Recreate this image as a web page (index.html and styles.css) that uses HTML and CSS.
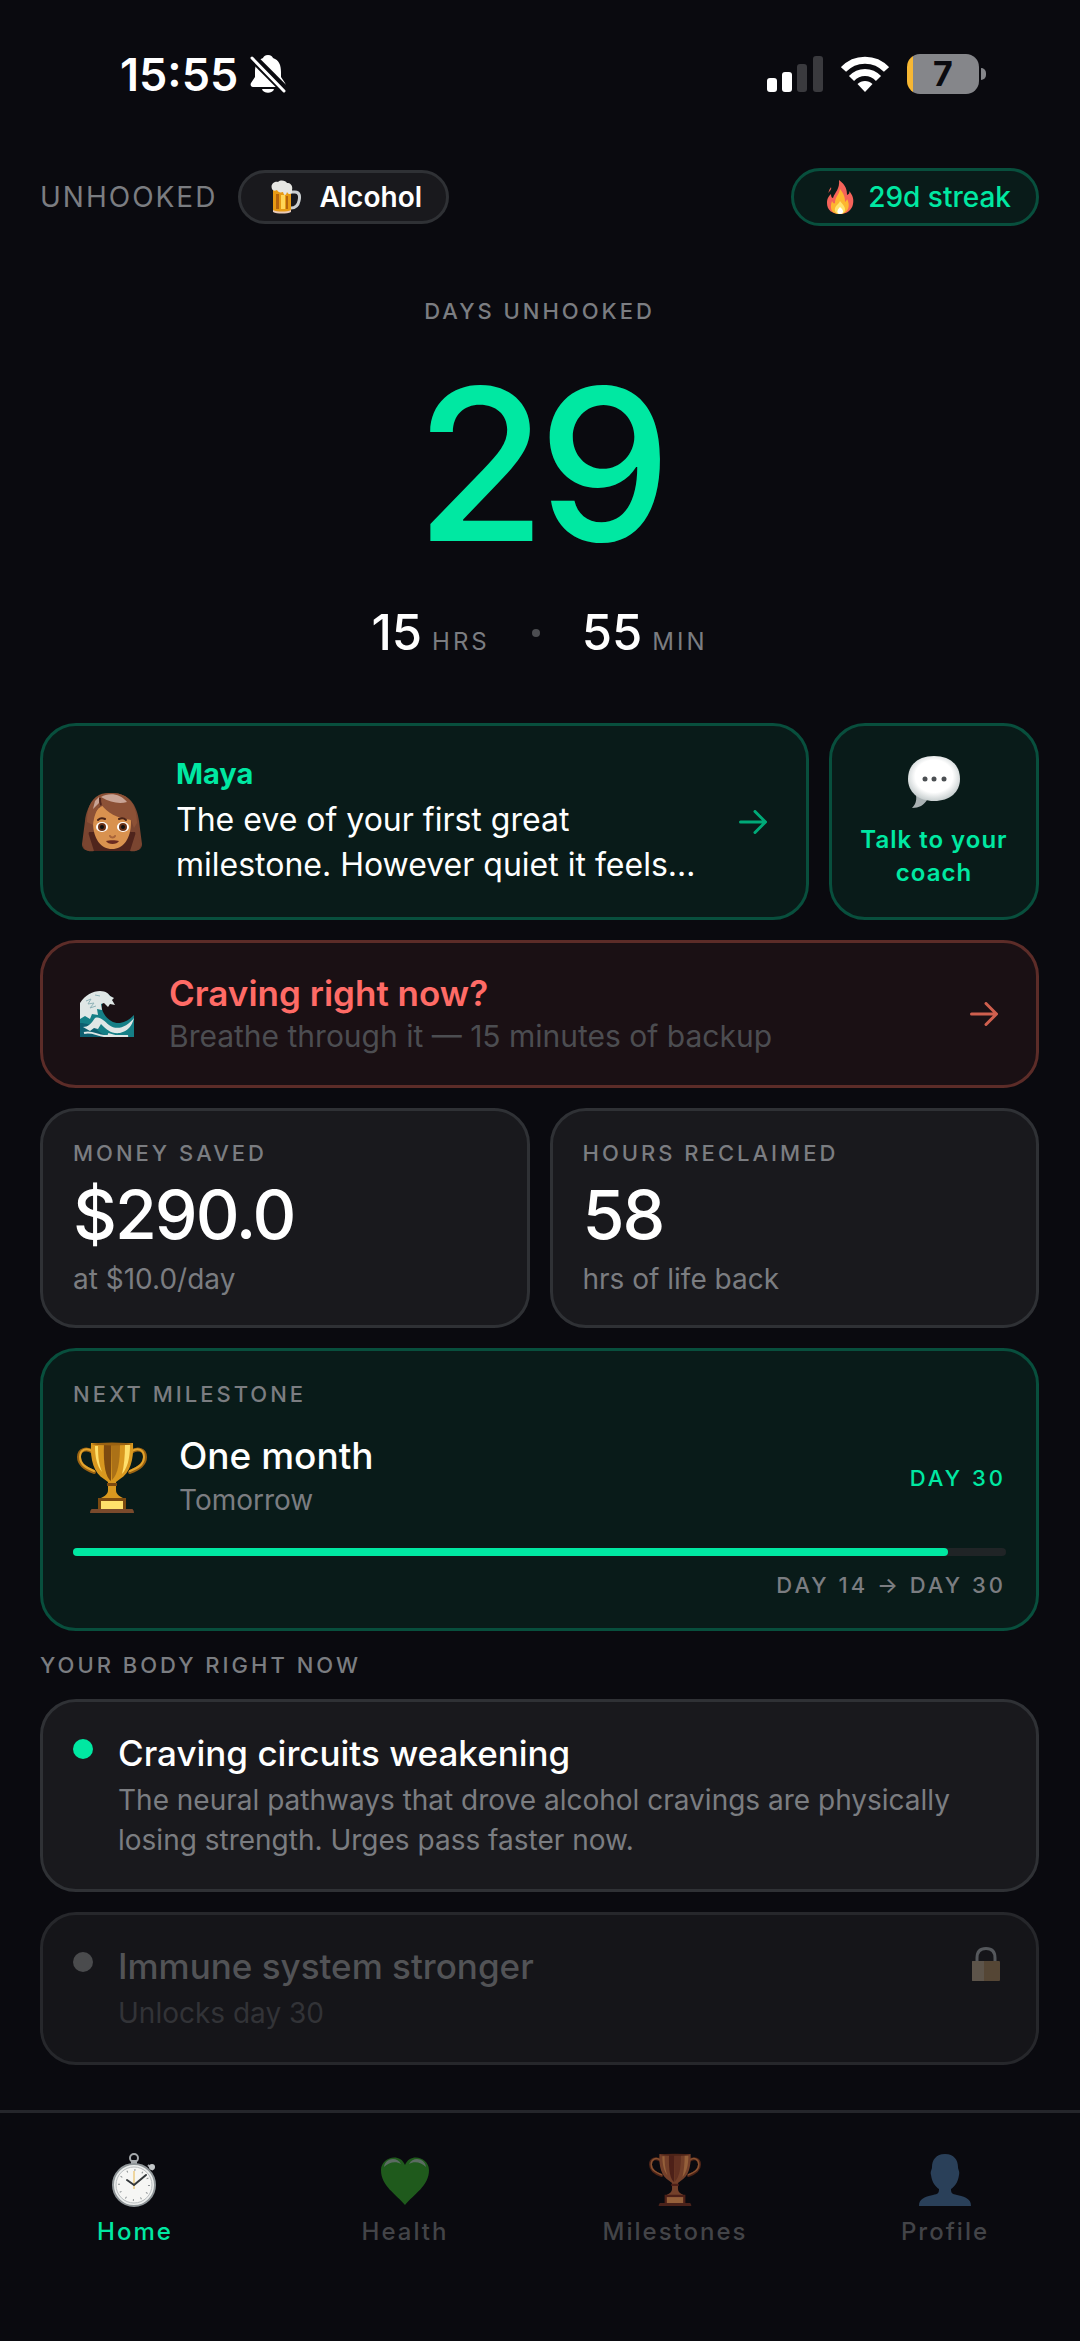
FILE: index.html
```html
<!DOCTYPE html>
<html lang="en">

<head>
    <meta charset="utf-8">
    <meta name="viewport" content="width=device-width, initial-scale=1">
    <title>Unhooked</title>
    <link rel="stylesheet" href="styles.css">
</head>

<body>
    <!-- shared icons -->
    <svg class="sprite" aria-hidden="true">
        <symbol id="arrow" viewBox="0 0 28 24">
            <path d="M1.5 12h24M16 1.5L26.5 12 16 22.5" fill="none" stroke="currentColor" stroke-width="3" stroke-linecap="round" stroke-linejoin="round" />
        </symbol>
        <symbol id="trophy" viewBox="0 0 70 72">
            <g fill="none" stroke-linecap="round">
                <path class="cup-dark" d="M16 10C9 5 2 8 2 15c0 8 7 12 15 15M54 10c7-5 14-2 14 5 0 8-7 12-15 15" stroke-width="4" />
                <path class="cup-mid" d="M15 9C9 5 3 8 3 15c0 8 7 11 14 14M55 9c6-4 12-1 12 6 0 8-7 11-14 14" stroke-width="2" />
            </g>
            <path class="cup-fill" d="M14 1h42c1 17-3 30-13 36l-4 3v8c0 4 3 6 7 8v2H24v-2c4-2 7-4 7-8v-8l-4-3C17 31 13 18 14 1z" />
            <path class="cup-shade" d="M27 2h7v37c-5-3-8-15-7-37z" />
            <path class="cup-band" d="M34 2h9c0 18-2 30-8 36z" opacity=".5" />
            <path class="cup-light" d="M48 3h5c0 14-3 24-8 29 2-8 3-18 3-29zM18 4h3c0 12 1 18 4 26-5-6-7-15-7-26z" />
            <path class="cup-shade" d="M30 41h10v3H30zM21 56h28v12H21z" />
            <path class="cup-light" d="M24 59h22v8H24z" />
            <path class="cup-base" d="M15 67h40c1 0 2 2 2 4H13c0-2 1-4 2-4z" />
            <ellipse class="cup-rim" cx="35" cy="2" rx="20" ry="1.5" />
        </symbol>
    </svg>

    <div class="status-bar">
        <div class="status-left">
            <span class="time">15:55</span>
            <svg width="36" height="40" viewBox="0 0 36 40" aria-label="Silent mode">
                <path d="M18 1c-3 0-4.500 1.500-5 3-6 2-8 7-8 14v5l-4 6c-1 2 0 4 2 4h30c2 0 3-2 2-4l-4-6v-5c0-7-2-12-8-14-.5-1.500-2-3-5-3z" fill="#fff" />
                <path d="M12 35h12c-1 5-11 5-12 0z" fill="#fff" />
                <path d="M2 3l33 33" stroke="#0a0a0f" stroke-width="9" />
                <path d="M2 4l32 33" stroke="#fff" stroke-width="3" stroke-linecap="round" />
            </svg>
        </div>
        <div class="status-right">
            <svg width="56" height="36" viewBox="0 0 56 36" aria-label="Signal">
                <rect x="0" y="22" width="10" height="14" rx="3" fill="#fff" />
                <rect x="15" y="16" width="10" height="20" rx="3" fill="#fff" />
                <rect x="30" y="8" width="10" height="28" rx="3" fill="#3a3a3e" />
                <rect x="46" y="0" width="10" height="36" rx="3" fill="#3a3a3e" />
            </svg>
            <svg width="48" height="36" viewBox="0 0 48 36" aria-label="Wi-Fi">
                <g fill="none" stroke="#fff" stroke-width="7">
                    <path d="M2.500 13.500C14 1 34 1 45.500 13.500" />
                    <path d="M10.500 22.500c7.500-8 19.500-8 27 0" />
                </g>
                <path d="M24 36l-7.500-8c4-4 11-4 15 0z" fill="#fff" />
            </svg>
            <div class="battery"><span class="battery-level">7</span></div>
        </div>
    </div>

    <main class="main">
        <header class="header">
            <h1 class="brand">UNHOOKED</h1>
            <button class="pill">
                <svg width="30" height="34" viewBox="0 0 30 34" aria-hidden="true">
                    <path d="M20 12h4c5 0 5 5 4 9-1 5-4 7-8 7" fill="none" stroke="#c9ced0" stroke-width="3" />
                    <path d="M2 9h18v22c-4 2-14 2-18 0z" fill="#e79a14" />
                    <path d="M5 14h3v15H5zM15 16h2v13h-2z" fill="#b5640c" />
                    <path d="M10 15h4v14h-4z" fill="#ffd557" />
                    <path d="M2 30c4 2 14 2 18 0v2c-4 2-14 2-18 0z" fill="#e8c9b8" />
                    <path d="M1 9c-2-5 3-8 6-7 3-3 8-1 9 1 4 0 6 3 5 7v3c-2 2-4 1-5-1-1 4-3 4-4 0-3 1-5 0-6-2-2 1-4 1-5-1z" fill="#e6e6e2" />
                </svg>
                <span>Alcohol</span>
            </button>
            <div class="pill pill-streak">
                <svg width="28" height="36" viewBox="0 0 28 36" aria-hidden="true">
                    <path d="M13 1c7 5 8 10 8 15 2-1 3-2 2-4 4 4 5 9 4 13-1 6-6 10-13 10C6 35 1 31 1 24c0-5 2-7 4-9 0 3 1 4 2 4 2-6 7-9 6-18z" fill="#f5635a" />
                    <path d="M3 12c0-2 2-3 2-4 1 2-1 4-3 6z" fill="#f5635a" />
                    <path d="M14 10c5 6 5 10 5 13 1-1 2-2 2-3 3 5 3 14-7 15C4 35 4 28 6 22c1 2 2 3 3 2 0-6 4-8 5-14z" fill="#fdb62f" />
                    <path d="M14 22c2 3 5 5 5 8 0 4-2 5-5 5s-6-2-5-6c1-3 4-4 5-7z" fill="#ffe36b" />
                    <path d="M14 28c5 4 3 7 0 7s-4-3 0-7z" fill="#fff" />
                </svg>
                <span>29d streak</span>
            </div>
        </header>

        <section class="hero">
            <h2 class="label">DAYS UNHOOKED</h2>
            <div class="days">29</div>
            <div class="clock">
                <span class="clock-item"><span class="clock-num">15</span> <span class="clock-unit">HRS</span></span>
                <span class="clock-dot"></span>
                <span class="clock-item"><span class="clock-num">55</span> <span class="clock-unit">MIN</span></span>
            </div>
        </section>

        <div class="cards">
            <div class="coach-row">
                <button class="card card-green message">
                    <svg width="62" height="60" viewBox="0 0 62 60" aria-hidden="true">
                        <path d="M31 1C14 1 6 13 4 29L1 52c0 5 4 7 9 7h42c5 0 9-2 9-7l-3-23C56 13 48 1 31 1z" fill="#7a4530" />
                        <path d="M8 40L2 55c2 3 6 4 10 4h38c4 0 8-1 10-4l-6-15z" fill="#4f241c" />
                        <path d="M2 53l5-13 6 19c-6 1-11-1-11-6zM60 53l-5-13-6 19c6 1 11-1 11-6z" fill="#7a4530" />
                        <path d="M12 30c0-12 8-18 19-18s19 6 19 18c0 17-8 27-19 27S12 47 12 30z" fill="#d9924f" />
                        <path d="M18 3c-9 5-12 14-12 27l6 3c1-9 3-14 8-21 6 9 16 14 30 16l3 8 3-5C56 13 48 1 31 1c-5 0-9 0-13 2z" fill="#8c5136" />
                        <path d="M20 5c8-5 20-3 26 5-7 2-16 1-26-5zM14 9l4-4v6l-6 6z" fill="#c9a495" />
                        <path d="M19 6c0 3 0 5 1 7" fill="none" stroke="#4f241c" stroke-width="2" />
                        <g fill="none" stroke="#4a2418" stroke-width="2" stroke-linecap="round">
                            <path d="M17 28c2-2 5-2 7-1M38 27c2-1 5-1 7 1" />
                        </g>
                        <ellipse cx="21" cy="35" rx="6" ry="5" fill="#fff" />
                        <ellipse cx="42" cy="35" rx="6" ry="5" fill="#fff" />
                        <circle cx="21" cy="35" r="4" fill="#6b3318" />
                        <circle cx="42" cy="35" r="4" fill="#6b3318" />
                        <circle cx="21" cy="35" r="2" fill="#111" />
                        <circle cx="42" cy="35" r="2" fill="#111" />
                        <path d="M29 44c1 2 4 2 5 0" fill="none" stroke="#a8643a" stroke-width="2" stroke-linecap="round" />
                        <path d="M25 49c3-1 10-1 13 0-2 4-11 4-13 0z" fill="#6a2a20" />
                    </svg>
                    <span class="message-text">
                        <span class="message-name">Maya</span>
                        <span class="message-body">The eve of your first great milestone. However quiet it feels…</span>
                    </span>
                    <svg class="arrow" width="28" height="24" aria-hidden="true"><use href="#arrow" /></svg>
                </button>
                <button class="card card-green coach">
                    <svg width="54" height="54" viewBox="0 0 54 54" aria-hidden="true">
                        <defs>
                            <radialGradient id="bubble" cx=".5" cy=".45" r=".6">
                                <stop offset=".6" stop-color="#fff" />
                                <stop offset="1" stop-color="#b9c2c3" />
                            </radialGradient>
                        </defs>
                        <path d="M9 40c1 6-1 10-4 13 7 0 12-3 15-8z" fill="#a9b1b3" />
                        <path d="M27 1c16 0 26 9 26 23 0 13-10 22-26 22S1 37 1 24C1 10 11 1 27 1z" fill="url(#bubble)" />
                        <circle cx="18" cy="24" r="2.500" fill="#4b4f52" />
                        <circle cx="27" cy="24" r="2.500" fill="#4b4f52" />
                        <circle cx="37" cy="24" r="2.500" fill="#4b4f52" />
                    </svg>
                    <span>Talk to your coach</span>
                </button>
            </div>

            <button class="card card-red craving">
                <svg width="54" height="46" viewBox="0 0 54 46" aria-hidden="true">
                    <path d="M0 46V14C4 6 12 1 20 1c6 0 10 3 13 7l-4 1 1 4-5-2c-3 0-4 3-3 7 2 8 10 15 18 14 6-1 10-4 14-8v22z" fill="#157f86" />
                    <path d="M0 46V32c6 0 12 2 16 6s8 6 14 8z" fill="#0e5f70" />
                    <path d="M0 12C5 4 13 0 20 0c6 0 9 3 10 5l4 2-2 2 3 5-5-1-2 3-4-4-3 1 1 6-5-1 1 6-6-1-2 5-5-3-5 3z" fill="#dfe7e6" />
                    <path d="M6 10l5-2-3 5 6-1-4 5 6-2M15 4l5 1" fill="none" stroke="#8fb3b8" stroke-width="1" />
                    <path d="M3 36c5 0 8-3 12-9 5-2 9 3 14 7 8 6 18 2 25-7-2 8-6 13-14 15-9 1-13-3-19-9l-3 5-4-1-4 3z" fill="#dfe7e6" />
                    <path d="M4 42c8-2 12 2 20 3h24c-8 2-14 0-20-2" fill="none" stroke="#dfe7e6" stroke-width="2" />
                </svg>
                <span class="craving-text">
                    <span class="craving-title">Craving right now?</span>
                    <span class="craving-sub">Breathe through it — 15 minutes of backup</span>
                </span>
                <svg class="arrow" width="28" height="24" aria-hidden="true"><use href="#arrow" /></svg>
            </button>

            <div class="stats">
                <section class="card stat">
                    <h2 class="label">MONEY SAVED</h2>
                    <div class="stat-value">$290.0</div>
                    <div class="stat-note">at $10.0/day</div>
                </section>
                <section class="card stat">
                    <h2 class="label">HOURS RECLAIMED</h2>
                    <div class="stat-value">58</div>
                    <div class="stat-note">hrs of life back</div>
                </section>
            </div>

            <section class="card card-green milestone">
                <h2 class="label">NEXT MILESTONE</h2>
                <div class="milestone-row">
                    <svg class="trophy" width="78" height="72" aria-hidden="true"><use href="#trophy" /></svg>
                    <div class="milestone-text">
                        <div class="milestone-title">One month</div>
                        <div class="milestone-when">Tomorrow</div>
                    </div>
                    <span class="label label-green">DAY 30</span>
                </div>
                <div class="progress" role="progressbar" aria-label="Next milestone" aria-valuemin="0" aria-valuemax="16" aria-valuenow="15">
                    <div class="progress-fill" style="width: 93.75%"></div>
                </div>
                <div class="label milestone-range">DAY 14 → DAY 30</div>
            </section>

            <h2 class="label label-section">YOUR BODY RIGHT NOW</h2>

            <section class="card body-card">
                <span class="dot"></span>
                <div class="body-text">
                    <h3>Craving circuits weakening</h3>
                    <p>The neural pathways that drove alcohol cravings are physically losing strength. Urges pass faster now.</p>
                </div>
            </section>

            <section class="card body-card locked">
                <span class="dot"></span>
                <div class="body-text">
                    <h3>Immune system stronger</h3>
                    <p>Unlocks day 30</p>
                </div>
                <svg class="lock" width="28" height="34" viewBox="0 0 28 34" aria-label="Locked">
                    <path d="M5 16v-5C5 4 9 1.500 14 1.500S23 4 23 11v5" fill="none" stroke="#8b8f94" stroke-width="3" />
                    <rect x="0" y="14" width="28" height="20" rx="1" fill="#8a6f4c" />
                    <path d="M0 14h12v20H0z" fill="#a39a8c" opacity=".6" />
                </svg>
            </section>
        </div>
    </main>

    <nav class="tabs">
        <a href="#home" class="tab active">
            <svg width="50" height="54" viewBox="0 0 50 54" aria-hidden="true">
                <circle cx="24" cy="5" r="4" fill="none" stroke="#a5a9ac" stroke-width="2" />
                <path d="M22 8h4v5h-4zM38 12l5 5" fill="#a5a9ac" stroke="#a5a9ac" stroke-width="2" />
                <circle cx="42" cy="14" r="3" fill="#c3c7c9" />
                <circle cx="24" cy="32" r="21" fill="#eceeed" stroke="#8f9598" stroke-width="2" />
                <circle cx="24" cy="32" r="18" fill="#f6f6f4" stroke="#b9bdbf" stroke-width="1" />
                <circle cx="24" cy="32" r="15" fill="none" stroke="#8d9294" stroke-width="2" stroke-dasharray="1 6.854" />
                <path d="M24 36V18" stroke="#e8b64a" stroke-width="1" />
                <path d="M24 32l12-10M24 32l-7-5" stroke="#33373a" stroke-width="2" stroke-linecap="round" />
            </svg>
            <span>Home</span>
        </a>
        <a href="#health" class="tab">
            <svg width="50" height="54" viewBox="0 0 50 54" aria-hidden="true">
                <path d="M25 52C16 41 1 33 1 17 1 4 20-1 25 12 30-1 49 4 49 17c0 16-15 24-24 35z" fill="#1f5a1c" />
                <path d="M4 14C5 5 17 3 21 11c-5-3-12-2-17 3zM46 14C45 5 33 3 29 11c5-3 12-2 17 3z" fill="#5b6b62" />
            </svg>
            <span>Health</span>
        </a>
        <a href="#milestones" class="tab">
            <svg class="trophy trophy-dim" width="52" height="54" aria-hidden="true"><use href="#trophy" /></svg>
            <span>Milestones</span>
        </a>
        <a href="#profile" class="tab">
            <svg width="52" height="54" viewBox="0 0 52 54" aria-hidden="true">
                <path d="M26 1c9 0 13 6 13 13 0 3 2 4 1 8-1 8-5 12-8 14 0 4 1 5 6 6 9 2 14 4 14 11H0c0-7 5-9 14-11 5-1 6-2 6-6-3-2-7-6-8-14-1-4 1-5 1-8 0-7 4-13 13-13z" fill="#2a4059" />
            </svg>
            <span>Profile</span>
        </a>
    </nav>
</body>

</html>
```

FILE: styles.css
```css
* {
    box-sizing: border-box;
}

:root {
    --bg: #0a0a0f;
    --card: #19191d;
    --border: #2f3135;
    --green: #00e8a2;
    --muted: #7b7d81;
    --dim: #4c4d51;
}

body {
    margin: 0;
    min-height: 100vh;
    display: flex;
    flex-direction: column;
    background-color: var(--bg);
    color: #ffffff;
    font-family: Inter, "Liberation Sans", sans-serif;
    font-size: 28px;
}

h1, h2, h3, p {
    margin: 0;
    font-weight: 400;
}

button {
    font: inherit;
    color: inherit;
    text-align: left;
    cursor: pointer;
}

svg {
    flex-shrink: 0;
}

.sprite {
    position: absolute;
    width: 0;
    height: 0;
}

/* status bar */
.status-bar {
    display: flex;
    justify-content: space-between;
    align-items: center;
    height: 148px;
    padding: 0 101px 0 120px;
}

.status-left {
    display: flex;
    align-items: center;
    gap: 12px;
}

.status-right {
    display: flex;
    align-items: center;
    gap: 18px;
}

.time {
    font-size: 45px;
    font-weight: 600;
}

.battery {
    position: relative;
    width: 72px;
    height: 40px;
    border-radius: 13px;
    background: linear-gradient(to right, #f7b733 6px, #85868a 6px);
    color: var(--bg);
    font-size: 34px;
    font-weight: 700;
    line-height: 40px;
    text-align: center;
}

.battery::after {
    content: "";
    position: absolute;
    right: -7px;
    top: 14px;
    width: 5px;
    height: 12px;
    border-radius: 0 5px 5px 0;
    background-color: #85868a;
}

/* header */
.main {
    padding: 20px 41px 44px 40px;
}

.header {
    display: flex;
    align-items: center;
    gap: 21px;
}

.brand {
    font-size: 28px;
    letter-spacing: 2px;
    color: var(--muted);
}

.pill {
    display: flex;
    align-items: center;
    gap: 18px;
    height: 54px;
    padding: 0 24px 0 30px;
    border: 3px solid var(--border);
    border-radius: 30px;
    background-color: var(--card);
    font-size: 28px;
    font-weight: 600;
}

.pill-streak {
    gap: 14px;
    height: 58px;
    margin-left: auto;
    padding: 0 25px 0 32px;
    border-color: #084f3d;
    background-color: #091b19;
    color: var(--green);
    font-weight: 500;
}

.label {
    font-size: 22px;
    line-height: 26px;
    font-weight: 500;
    letter-spacing: 3px;
    color: var(--muted);
}

.label-green {
    color: var(--green);
}

.label-section {
    line-height: 28px;
}

/* counter */
.hero {
    display: flex;
    flex-direction: column;
    align-items: center;
    padding: 72px 0 65px;
}

.days {
    margin: 34px 0 38px;
    font-size: 212px;
    line-height: 212px;
    font-weight: 500;
    letter-spacing: -8px;
    color: var(--green);
}

.clock {
    display: flex;
    align-items: center;
    gap: 42px;
}

.clock-item {
    display: flex;
    align-items: baseline;
    gap: 10px;
}

.clock-num {
    font-size: 49px;
    line-height: 50px;
    font-weight: 500;
}

.clock-unit {
    font-size: 24px;
    line-height: 24px;
    letter-spacing: 3px;
    color: var(--muted);
}

.clock-dot {
    width: 8px;
    height: 8px;
    border-radius: 50%;
    background-color: var(--dim);
}

/* cards */
.cards {
    display: flex;
    flex-direction: column;
    gap: 20px;
}

.card {
    border: 3px solid var(--border);
    border-radius: 36px;
    background-color: var(--card);
}

.card-green {
    border-color: #084f3d;
    background-color: #091b19;
}

.card-red {
    border-color: #5c2c28;
    background-color: #1a1014;
}

.coach-row {
    display: flex;
    gap: 20px;
}

.message {
    flex: 1;
    display: flex;
    align-items: center;
    gap: 33px;
    padding: 30px 39px 30px 38px;
}

.message-text {
    flex: 1;
    display: flex;
    flex-direction: column;
    gap: 5px;
}

.message-name {
    font-size: 29px;
    line-height: 36px;
    font-weight: 700;
    color: var(--green);
}

.message-body {
    font-size: 32px;
    line-height: 45px;
}

.message .arrow {
    color: #00aa78;
}

.coach {
    width: 210px;
    display: flex;
    flex-direction: column;
    align-items: center;
    justify-content: center;
    gap: 14px;
    padding: 28px 16px;
    font-size: 24px;
    line-height: 33px;
    font-weight: 600;
    letter-spacing: 1px;
    text-align: center;
    color: var(--green);
}

.craving {
    display: flex;
    align-items: center;
    gap: 35px;
    padding: 28px 38px 28px 37px;
}

.craving-text {
    flex: 1;
    display: flex;
    flex-direction: column;
}

.craving-title {
    font-size: 35px;
    line-height: 44px;
    font-weight: 600;
    color: #ff6b66;
}

.craving-sub {
    font-size: 30px;
    line-height: 42px;
    color: var(--dim);
}

.craving .arrow {
    color: #cf5f4e;
}

.stats {
    display: grid;
    grid-template-columns: 1fr 1fr;
    gap: 20px;
}

.stat {
    padding: 29px 30px;
}

.stat-value {
    margin: 8px 0;
    font-size: 68px;
    line-height: 80px;
    font-weight: 500;
    letter-spacing: -2px;
}

.stat-note {
    font-size: 28px;
    line-height: 34px;
    color: var(--muted);
}

.milestone {
    padding: 30px;
}

.milestone-row {
    display: flex;
    align-items: center;
    gap: 28px;
    margin: 26px 0;
}

.milestone-text {
    flex: 1;
}

.milestone-title {
    font-size: 37px;
    line-height: 46px;
    font-weight: 500;
}

.milestone-when {
    font-size: 28px;
    line-height: 43px;
    color: var(--muted);
}

.milestone-range {
    margin-top: 16px;
    text-align: right;
}

.progress {
    height: 8px;
    border-radius: 4px;
    background-color: #202426;
}

.progress-fill {
    height: 100%;
    border-radius: 4px;
    background-color: var(--green);
}

.trophy {
    --dark: #9a6212;
    --mid: #e3a32b;
    --fill: #d9981f;
    --shade: #7d4a10;
    --light: #ffe06b;
    --base: #7a4a2c;
}

.trophy-dim {
    --dark: #4d2418;
    --mid: #8a5230;
    --fill: #74402a;
    --shade: #4d2018;
    --light: #95603a;
    --base: #4a221a;
}

.cup-dark {
    stroke: var(--dark);
}

.cup-mid {
    stroke: var(--mid);
}

.cup-rim {
    fill: var(--dark);
}

.cup-fill {
    fill: var(--fill);
}

.cup-shade,
.cup-band {
    fill: var(--shade);
}

.cup-light {
    fill: var(--light);
}

.cup-base {
    fill: var(--base);
}

/* body timeline */
.body-card {
    display: flex;
    align-items: flex-start;
    gap: 25px;
    padding: 29px 36px 29px 30px;
}

.body-text {
    flex: 1;
}

.body-text h3 {
    font-size: 35px;
    line-height: 44px;
    font-weight: 500;
}

.body-text p {
    margin-top: 5px;
    font-size: 28px;
    line-height: 40px;
    color: var(--muted);
}

.dot {
    width: 20px;
    height: 20px;
    margin-top: 8px;
    border-radius: 50%;
    background-color: var(--green);
}

.locked {
    border-color: #26272b;
    background-color: #151519;
}

.locked .dot {
    background-color: #4a4b4d;
}

.locked h3 {
    color: #525356;
}

.locked p {
    color: #323337;
}

.lock {
    margin-top: 3px;
    opacity: 0.55;
}

/* bottom tabs */
.tabs {
    display: flex;
    margin-top: auto;
    padding: 40px 0 94px;
    border-top: 3px solid #25262b;
}

.tab {
    flex: 1;
    display: flex;
    flex-direction: column;
    align-items: center;
    gap: 10px;
    font-size: 24px;
    line-height: 30px;
    font-weight: 500;
    letter-spacing: 2px;
    text-decoration: none;
    color: #434448;
}

.tab.active {
    color: var(--green);
}
```
